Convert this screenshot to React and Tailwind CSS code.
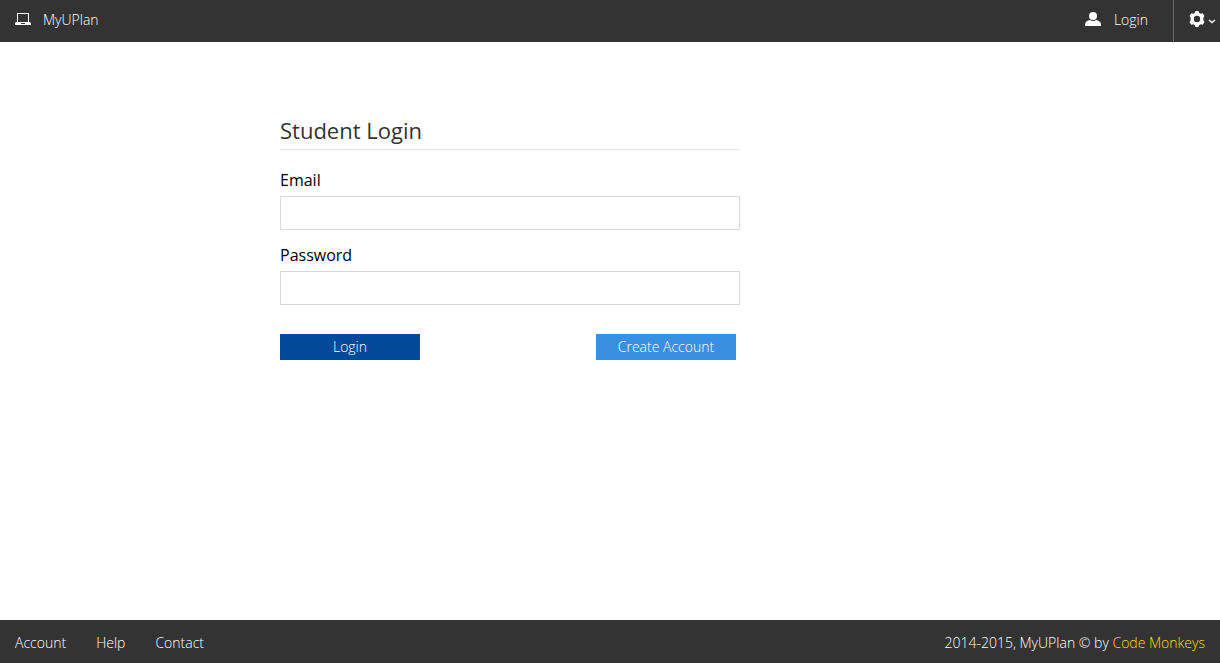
function LaptopIcon() {
  return (
    <svg className="h-4 w-4" viewBox="0 0 16 16" fill="currentColor" aria-hidden="true">
      <path fillRule="evenodd" d="M2 1h12v9h1l1 1v2H0v-2l1-1h1V1Zm1 1v8h10V2H3Zm3 9v1h4v-1H6Z" />
    </svg>
  );
}

function UserIcon() {
  return (
    <svg className="h-4 w-4" viewBox="0 0 16 16" fill="currentColor" aria-hidden="true">
      <ellipse cx="8" cy="4" rx="4" ry="4" />
      <path d="M0 14v-1.500C0 10 2.200 8.500 5 8c1.700 1.300 4.300 1.300 6 0 2.800.500 5 2 5 4.500V14H0Z" />
    </svg>
  );
}

function GearIcon() {
  return (
    <svg className="h-4 w-4" viewBox="0 0 16 16" fill="currentColor" aria-hidden="true">
      <path
        fillRule="evenodd"
        d="M6.500 0h3l.6 1.700 1.700 1 2-.4 1.700 2.700-1.100 1.600v2.800l1.100 1.600-1.700 2.700-2-.4-1.700 1L9.500 16h-3l-.6-1.700-1.700-1-2 .4L.5 11l1.100-1.600V6.600L.5 5l1.700-2.700 2 .4 1.700-1L6.500 0ZM8 4.800a3.200 3.200 0 1 0 0 6.400 3.200 3.200 0 0 0 0-6.400Z"
      />
    </svg>
  );
}

function Header() {
  return (
    <header className="flex h-[42px] items-stretch justify-between bg-[#333333] text-white">
      <a href="#home" className="flex items-center gap-3 pb-0.5 pl-[15px]">
        <LaptopIcon />
        MyUPlan
      </a>
      <nav className="flex">
        <a href="#login" className="flex items-center gap-[13px] pr-[25px] pb-0.5">
          <UserIcon />
          Login
        </a>
        <button type="button" aria-label="Settings" className="flex items-center gap-[3px] border-l border-[#6b6b6b] pr-1 pb-1 pl-[15px]">
          <GearIcon />
          <svg className="mt-1 h-2 w-2" viewBox="0 0 8 8" fill="none" stroke="currentColor" strokeWidth="1.5" aria-hidden="true">
            <path d="m1 3 3 2.500L7 3" />
          </svg>
        </button>
      </nav>
    </header>
  );
}

function Field({ id, label, type }) {
  return (
    <div className="flex flex-col gap-1">
      <label htmlFor={id} className="text-base leading-6 font-normal">{label}</label>
      <input id={id} type={type} className="h-[34px] w-full border border-[#d9d9d9] bg-white px-2 outline-none focus:border-[#919191]" />
    </div>
  );
}

export default function App() {
  return (
    <div className="flex min-h-screen flex-col bg-white font-['Open_Sans',sans-serif] text-sm leading-5 font-light text-black">
      <Header />
      <main className="mx-auto w-full max-w-[940px] grow px-4 pt-[74px] md:px-[140px]">
        <form className="w-full max-w-[460px]" onSubmit={(event) => event.preventDefault()}>
          <h1 className="border-b border-[#e5e5e5] pb-1 text-[22px] leading-[29px] font-normal text-[#333333]">Student Login</h1>
          <div className="mt-[18px] flex flex-col gap-[13px]">
            <Field id="email" label="Email" type="email" />
            <Field id="password" label="Password" type="password" />
          </div>
          <div className="mt-[29px] flex justify-between pr-1">
            <button type="submit" className="h-[26px] w-[140px] bg-[#004a99] text-white">Login</button>
            <button type="button" className="h-[26px] w-[140px] bg-[#3b8fe0] text-white">Create Account</button>
          </div>
        </form>
      </main>
      <footer className="flex h-[43px] items-center justify-between bg-[#333333] px-[15px] pt-0.5 text-white">
        <nav className="flex gap-[30px]">
          <a href="#account">Account</a>
          <a href="#help">Help</a>
          <a href="#contact">Contact</a>
        </nav>
        <p>
          2014-2015, MyUPlan © by <a href="#code-monkeys" className="text-[#ffdd00]">Code Monkeys</a>
        </p>
      </footer>
    </div>
  );
}
